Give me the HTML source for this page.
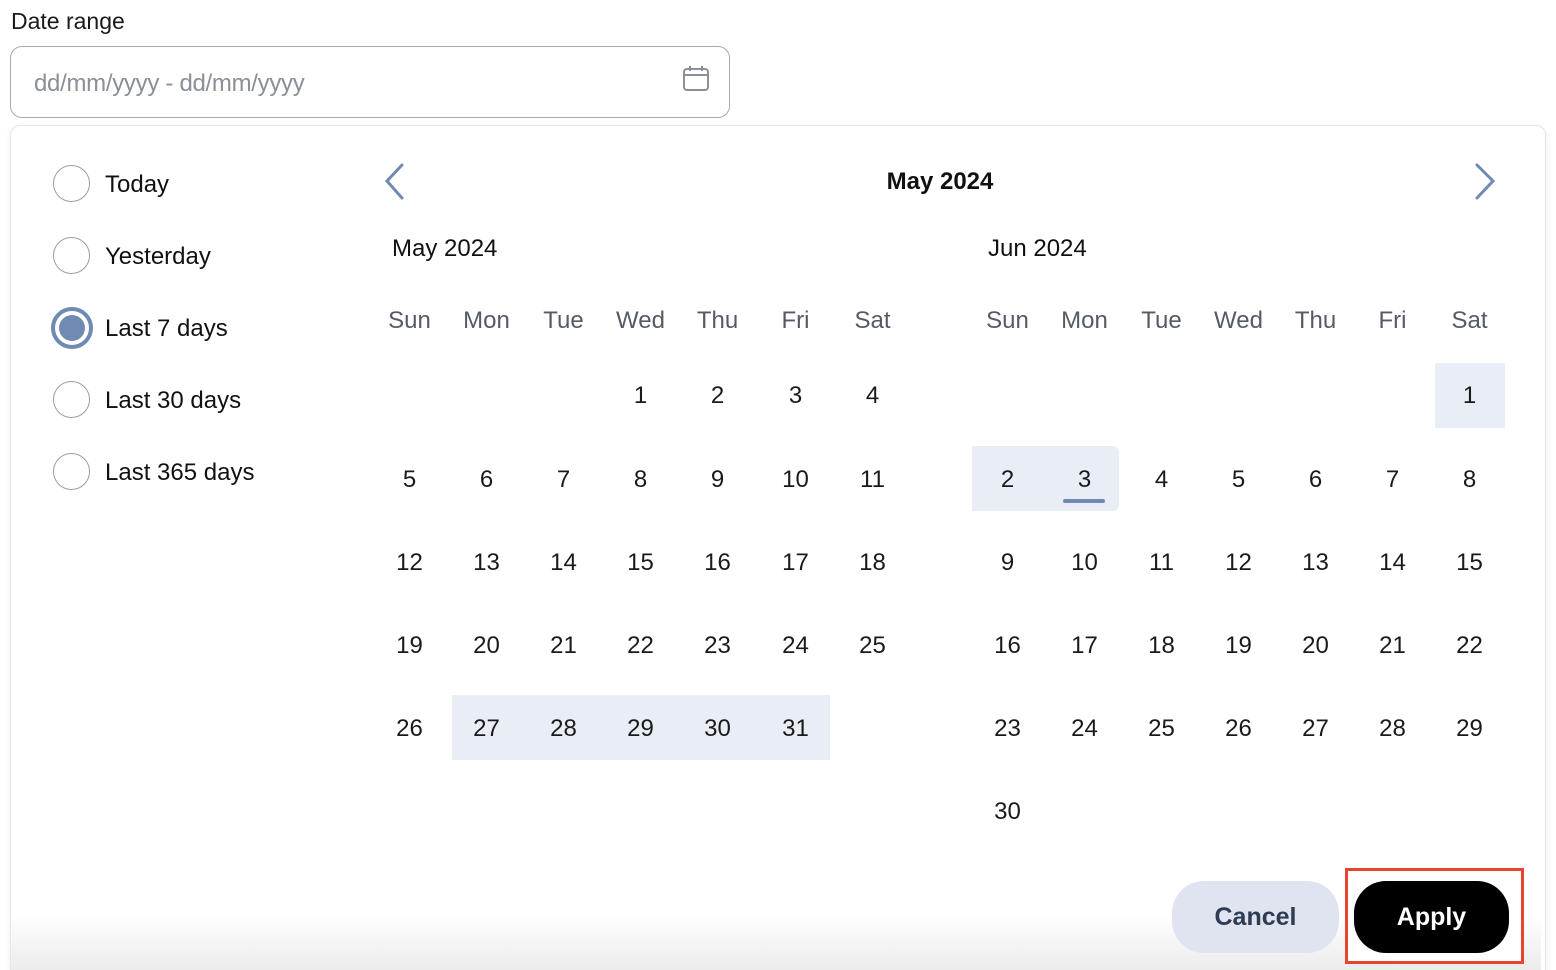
<!DOCTYPE html>
<html><head><meta charset="utf-8"><style>
*{box-sizing:border-box;margin:0;padding:0}
html,body{width:1556px;height:970px;overflow:hidden}
body{background:#fff;font-family:"Liberation Sans",sans-serif;color:#111;position:relative}
.a{position:absolute}
.lbl{left:11px;top:8px;font-size:23px;color:#1a1a1a}
.inp{left:10px;top:46px;width:720px;height:72px;border:1px solid #a6a9b0;border-radius:12px}
.ph{left:34px;top:70px;font-size:24px;color:#8a8f98;letter-spacing:-0.3px}
.panel{left:10px;top:125px;width:1536px;height:860px;border:1px solid #e3e6ec;border-radius:10px;background:#fff;box-shadow:0 2px 8px rgba(0,0,0,.06);overflow:hidden}
.fade{left:11px;top:915px;width:1530px;height:55px;background:linear-gradient(to bottom,rgba(240,240,240,0),rgba(236,236,236,1));}
.r{width:37px;height:37px;border:1.5px solid #9a9ea6;border-radius:50%;left:53px}
.rt{left:105px;font-size:24px;color:#111;margin-top:2px}
.c{width:77px;text-align:center;font-size:24px;color:#1a1a1a;height:30px;line-height:30px;margin-top:1px}
.w{color:#555b66}
.hl{background:#e9edf6}
.btn{border-radius:32px;font-size:25px;font-weight:bold;text-align:center;line-height:72px;height:72px}
</style></head><body>
<div class="a lbl">Date range</div>
<div class="a inp"></div>
<div class="a ph">dd/mm/yyyy - dd/mm/yyyy</div>
<svg class="a" style="left:682px;top:64px" width="28" height="28" viewBox="0 0 28 28" fill="none" stroke="#8a8f98" stroke-width="2"><rect x="2" y="5" width="24" height="21" rx="3"/><path d="M2 11h24M8 2v5M20 2v5"/></svg>
<div class="a panel"></div>
<div class="a fade"></div>

<div class="a r" style="top:165px"></div><div class="a rt" style="top:169px">Today</div>
<div class="a r" style="top:237px"></div><div class="a rt" style="top:241px">Yesterday</div>
<div class="a r" style="top:307px;left:51px;width:42px;height:42px;border:4px solid #6f8bb4"></div>
<div class="a" style="left:59px;top:315px;width:26px;height:26px;border-radius:50%;background:#6f8bb4"></div>
<div class="a rt" style="top:313px">Last 7 days</div>
<div class="a r" style="top:381px"></div><div class="a rt" style="top:385px">Last 30 days</div>
<div class="a r" style="top:453px"></div><div class="a rt" style="top:457px">Last 365 days</div>

<svg class="a" style="left:382px;top:162px" width="26" height="40" viewBox="0 0 26 40" fill="none" stroke="#6f8bb4" stroke-width="3" stroke-linecap="round"><path d="M20 3L5 19l15 17"/></svg>
<svg class="a" style="left:1472px;top:162px" width="26" height="40" viewBox="0 0 26 40" fill="none" stroke="#6f8bb4" stroke-width="3" stroke-linecap="round"><path d="M5 3l16 16L5 36"/></svg>
<div class="a" style="left:840px;top:168px;width:200px;text-align:center;font-size:24px;font-weight:bold">May 2024</div>
<div class="a" style="left:392px;top:235px;font-size:24px">May 2024</div>
<div class="a" style="left:988px;top:235px;font-size:24px">Jun 2024</div>

<div class="a hl" style="left:452px;top:695px;width:378px;height:65px"></div>
<div class="a hl" style="left:1435px;top:363px;width:70px;height:65px"></div>
<div class="a hl" style="left:972px;top:446px;width:147px;height:65px;border-radius:0 6px 6px 0"></div>
<div class="a" style="left:1063px;top:499px;width:42px;height:4px;border-radius:2px;background:#6f8bb4"></div>

<!-- May -->
<div class="a c w" style="left:371px;top:305px">Sun</div><div class="a c w" style="left:448px;top:305px">Mon</div><div class="a c w" style="left:525px;top:305px">Tue</div><div class="a c w" style="left:602px;top:305px">Wed</div><div class="a c w" style="left:679px;top:305px">Thu</div><div class="a c w" style="left:757px;top:305px">Fri</div><div class="a c w" style="left:834px;top:305px">Sat</div>
<div class="a c" style="left:602px;top:380px">1</div><div class="a c" style="left:679px;top:380px">2</div><div class="a c" style="left:757px;top:380px">3</div><div class="a c" style="left:834px;top:380px">4</div>
<div class="a c" style="left:371px;top:464px">5</div><div class="a c" style="left:448px;top:464px">6</div><div class="a c" style="left:525px;top:464px">7</div><div class="a c" style="left:602px;top:464px">8</div><div class="a c" style="left:679px;top:464px">9</div><div class="a c" style="left:757px;top:464px">10</div><div class="a c" style="left:834px;top:464px">11</div>
<div class="a c" style="left:371px;top:547px">12</div><div class="a c" style="left:448px;top:547px">13</div><div class="a c" style="left:525px;top:547px">14</div><div class="a c" style="left:602px;top:547px">15</div><div class="a c" style="left:679px;top:547px">16</div><div class="a c" style="left:757px;top:547px">17</div><div class="a c" style="left:834px;top:547px">18</div>
<div class="a c" style="left:371px;top:630px">19</div><div class="a c" style="left:448px;top:630px">20</div><div class="a c" style="left:525px;top:630px">21</div><div class="a c" style="left:602px;top:630px">22</div><div class="a c" style="left:679px;top:630px">23</div><div class="a c" style="left:757px;top:630px">24</div><div class="a c" style="left:834px;top:630px">25</div>
<div class="a c" style="left:371px;top:713px">26</div><div class="a c" style="left:448px;top:713px">27</div><div class="a c" style="left:525px;top:713px">28</div><div class="a c" style="left:602px;top:713px">29</div><div class="a c" style="left:679px;top:713px">30</div><div class="a c" style="left:757px;top:713px">31</div>

<!-- Jun -->
<div class="a c w" style="left:969px;top:305px">Sun</div><div class="a c w" style="left:1046px;top:305px">Mon</div><div class="a c w" style="left:1123px;top:305px">Tue</div><div class="a c w" style="left:1200px;top:305px">Wed</div><div class="a c w" style="left:1277px;top:305px">Thu</div><div class="a c w" style="left:1354px;top:305px">Fri</div><div class="a c w" style="left:1431px;top:305px">Sat</div>
<div class="a c" style="left:1431px;top:380px">1</div>
<div class="a c" style="left:969px;top:464px">2</div><div class="a c" style="left:1046px;top:464px">3</div><div class="a c" style="left:1123px;top:464px">4</div><div class="a c" style="left:1200px;top:464px">5</div><div class="a c" style="left:1277px;top:464px">6</div><div class="a c" style="left:1354px;top:464px">7</div><div class="a c" style="left:1431px;top:464px">8</div>
<div class="a c" style="left:969px;top:547px">9</div><div class="a c" style="left:1046px;top:547px">10</div><div class="a c" style="left:1123px;top:547px">11</div><div class="a c" style="left:1200px;top:547px">12</div><div class="a c" style="left:1277px;top:547px">13</div><div class="a c" style="left:1354px;top:547px">14</div><div class="a c" style="left:1431px;top:547px">15</div>
<div class="a c" style="left:969px;top:630px">16</div><div class="a c" style="left:1046px;top:630px">17</div><div class="a c" style="left:1123px;top:630px">18</div><div class="a c" style="left:1200px;top:630px">19</div><div class="a c" style="left:1277px;top:630px">20</div><div class="a c" style="left:1354px;top:630px">21</div><div class="a c" style="left:1431px;top:630px">22</div>
<div class="a c" style="left:969px;top:713px">23</div><div class="a c" style="left:1046px;top:713px">24</div><div class="a c" style="left:1123px;top:713px">25</div><div class="a c" style="left:1200px;top:713px">26</div><div class="a c" style="left:1277px;top:713px">27</div><div class="a c" style="left:1354px;top:713px">28</div><div class="a c" style="left:1431px;top:713px">29</div>
<div class="a c" style="left:969px;top:796px">30</div>

<div class="a btn" style="left:1172px;top:881px;width:167px;background:#dfe4f0;color:#2e3b52">Cancel</div>
<div class="a" style="left:1345px;top:868px;width:179px;height:96px;border:3px solid #e8452c;background:#fff"></div>
<div class="a btn" style="left:1354px;top:881px;width:155px;background:#000;color:#fff">Apply</div>
</body></html>
